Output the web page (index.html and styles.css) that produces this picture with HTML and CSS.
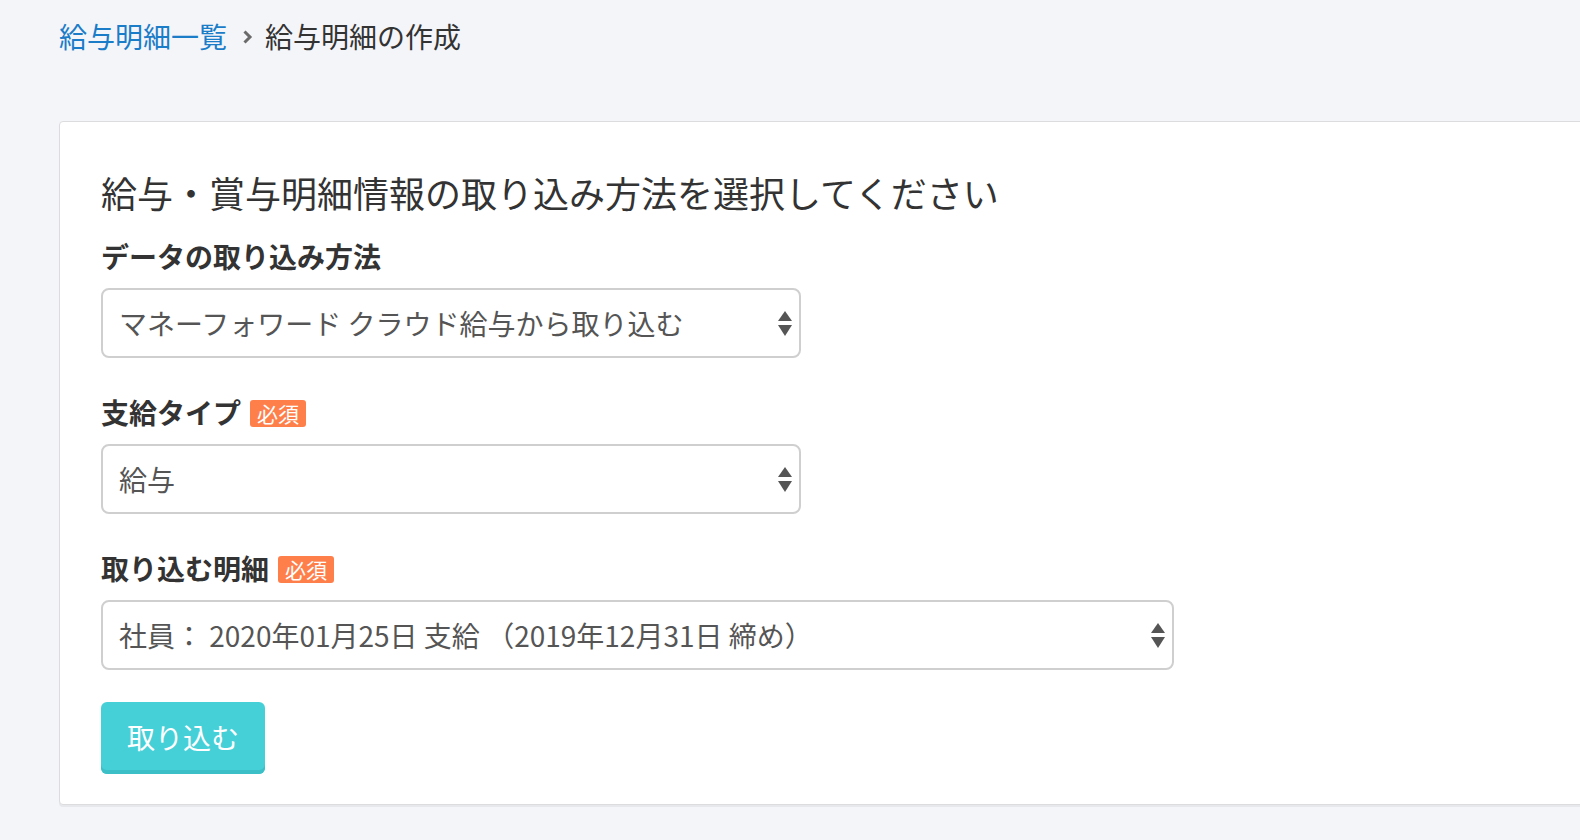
FILE: index.html
```html
<!DOCTYPE html>
<html lang="ja">
<head>
<meta charset="utf-8">
<title>給与明細の作成</title>
<link rel="stylesheet" href="styles.css">
</head>
<body>
<div class="page">
  <nav class="breadcrumb">
    <a class="crumb-link" href="#">給与明細一覧</a>
    <svg class="crumb-sep" width="11" height="16" viewBox="0 0 11 16"><path d="M2.5 2.5 L8 8 L2.5 13.5" fill="none" stroke="#6a6a6a" stroke-width="3"/></svg>
    <span class="crumb-current">給与明細の作成</span>
  </nav>
  <section class="card">
    <h1 class="title">給与・賞与明細情報の取り込み方法を選択してください</h1>
    <div class="group">
      <div class="label">データの取り込み方法</div>
      <div class="select-wrap w-mid">
        <select class="select"><option>マネーフォワード クラウド給与から取り込む</option></select>
        <svg class="arrows" width="14" height="26" viewBox="0 0 14 26"><path d="M7 0 L14 10 L0 10 Z" fill="#555"/><path d="M0 14 L14 14 L7 25 Z" fill="#555"/></svg>
      </div>
    </div>
    <div class="group">
      <div class="label">支給タイプ<span class="badge">必須</span></div>
      <div class="select-wrap w-mid">
        <select class="select"><option>給与</option></select>
        <svg class="arrows" width="14" height="26" viewBox="0 0 14 26"><path d="M7 0 L14 10 L0 10 Z" fill="#555"/><path d="M0 14 L14 14 L7 25 Z" fill="#555"/></svg>
      </div>
    </div>
    <div class="group last">
      <div class="label">取り込む明細<span class="badge">必須</span></div>
      <div class="select-wrap w-wide">
        <select class="select"><option>社員： 2020年01月25日 支給 （2019年12月31日 締め）</option></select>
        <svg class="arrows" width="14" height="26" viewBox="0 0 14 26"><path d="M7 0 L14 10 L0 10 Z" fill="#555"/><path d="M0 14 L14 14 L7 25 Z" fill="#555"/></svg>
      </div>
    </div>
    <button class="btn" type="button">取り込む</button>
  </section>
</div>
</body>
</html>
```
FILE: styles.css
```css
html, body {
  margin: 0;
  padding: 0;
}
body {
  background: #f4f5f9;
  font-family: "Noto Sans CJK JP", "Noto Sans", sans-serif;
  color: #333;
  overflow: hidden;
  width: 1580px;
  height: 840px;
}
.page {
  padding: 16px 0 0 59px;
}
.breadcrumb {
  display: flex;
  align-items: center;
  font-size: 28px;
  line-height: 40px;
  height: 40px;
}
.crumb-link {
  color: #1b7cc8;
  text-decoration: none;
}
.crumb-sep {
  margin: 2px 12px 0 15px;
}
.crumb-current {
  color: #333;
}
.card {
  margin-top: 65px;
  width: 1560px;
  box-sizing: border-box;
  background: #fff;
  border: 1px solid #dcdcdf;
  border-radius: 4px;
  box-shadow: 0 2px 0 rgba(0, 0, 0, 0.05);
  padding: 45px 0 30px 41px;
}
.title {
  margin: 0 0 19px 0;
  font-size: 36px;
  line-height: 50px;
  font-weight: 400;
  color: #333;
}
.group {
  margin-bottom: 34px;
}
.group.last {
  margin-bottom: 32px;
}
.label {
  display: flex;
  align-items: center;
  font-size: 28px;
  line-height: 40px;
  height: 40px;
  font-weight: 700;
  color: #333;
  margin-bottom: 12px;
}
.badge {
  display: inline-block;
  margin-left: 9px;
  margin-top: 2px;
  background: #ff7f4b;
  color: #fff;
  font-size: 21px;
  line-height: 27px;
  height: 27px;
  padding: 0 7px;
  border-radius: 3px;
  font-weight: 400;
}
.select-wrap {
  position: relative;
  height: 70px;
}
.w-mid {
  width: 700px;
}
.w-wide {
  width: 1073px;
}
.select {
  appearance: none;
  -webkit-appearance: none;
  width: 100%;
  height: 70px;
  box-sizing: border-box;
  border: 2px solid #cfcfcf;
  border-radius: 8px;
  background: #fff;
  font-family: "Noto Sans CJK JP", "Noto Sans", sans-serif;
  font-size: 28px;
  color: #555;
  padding: 0 40px 0 16px;
  outline: none;
}
.arrows {
  position: absolute;
  right: 9px;
  top: 23px;
  pointer-events: none;
}
.btn {
  display: block;
  height: 72px;
  padding: 0 26px 3px;
  border: none;
  border-radius: 6px;
  background: #45d0d8;
  box-shadow: inset 0 -4px 0 #3cbfc6;
  color: #fff;
  font-family: "Noto Sans CJK JP", "Noto Sans", sans-serif;
  font-size: 28px;
  line-height: 40px;
  cursor: pointer;
}
```
